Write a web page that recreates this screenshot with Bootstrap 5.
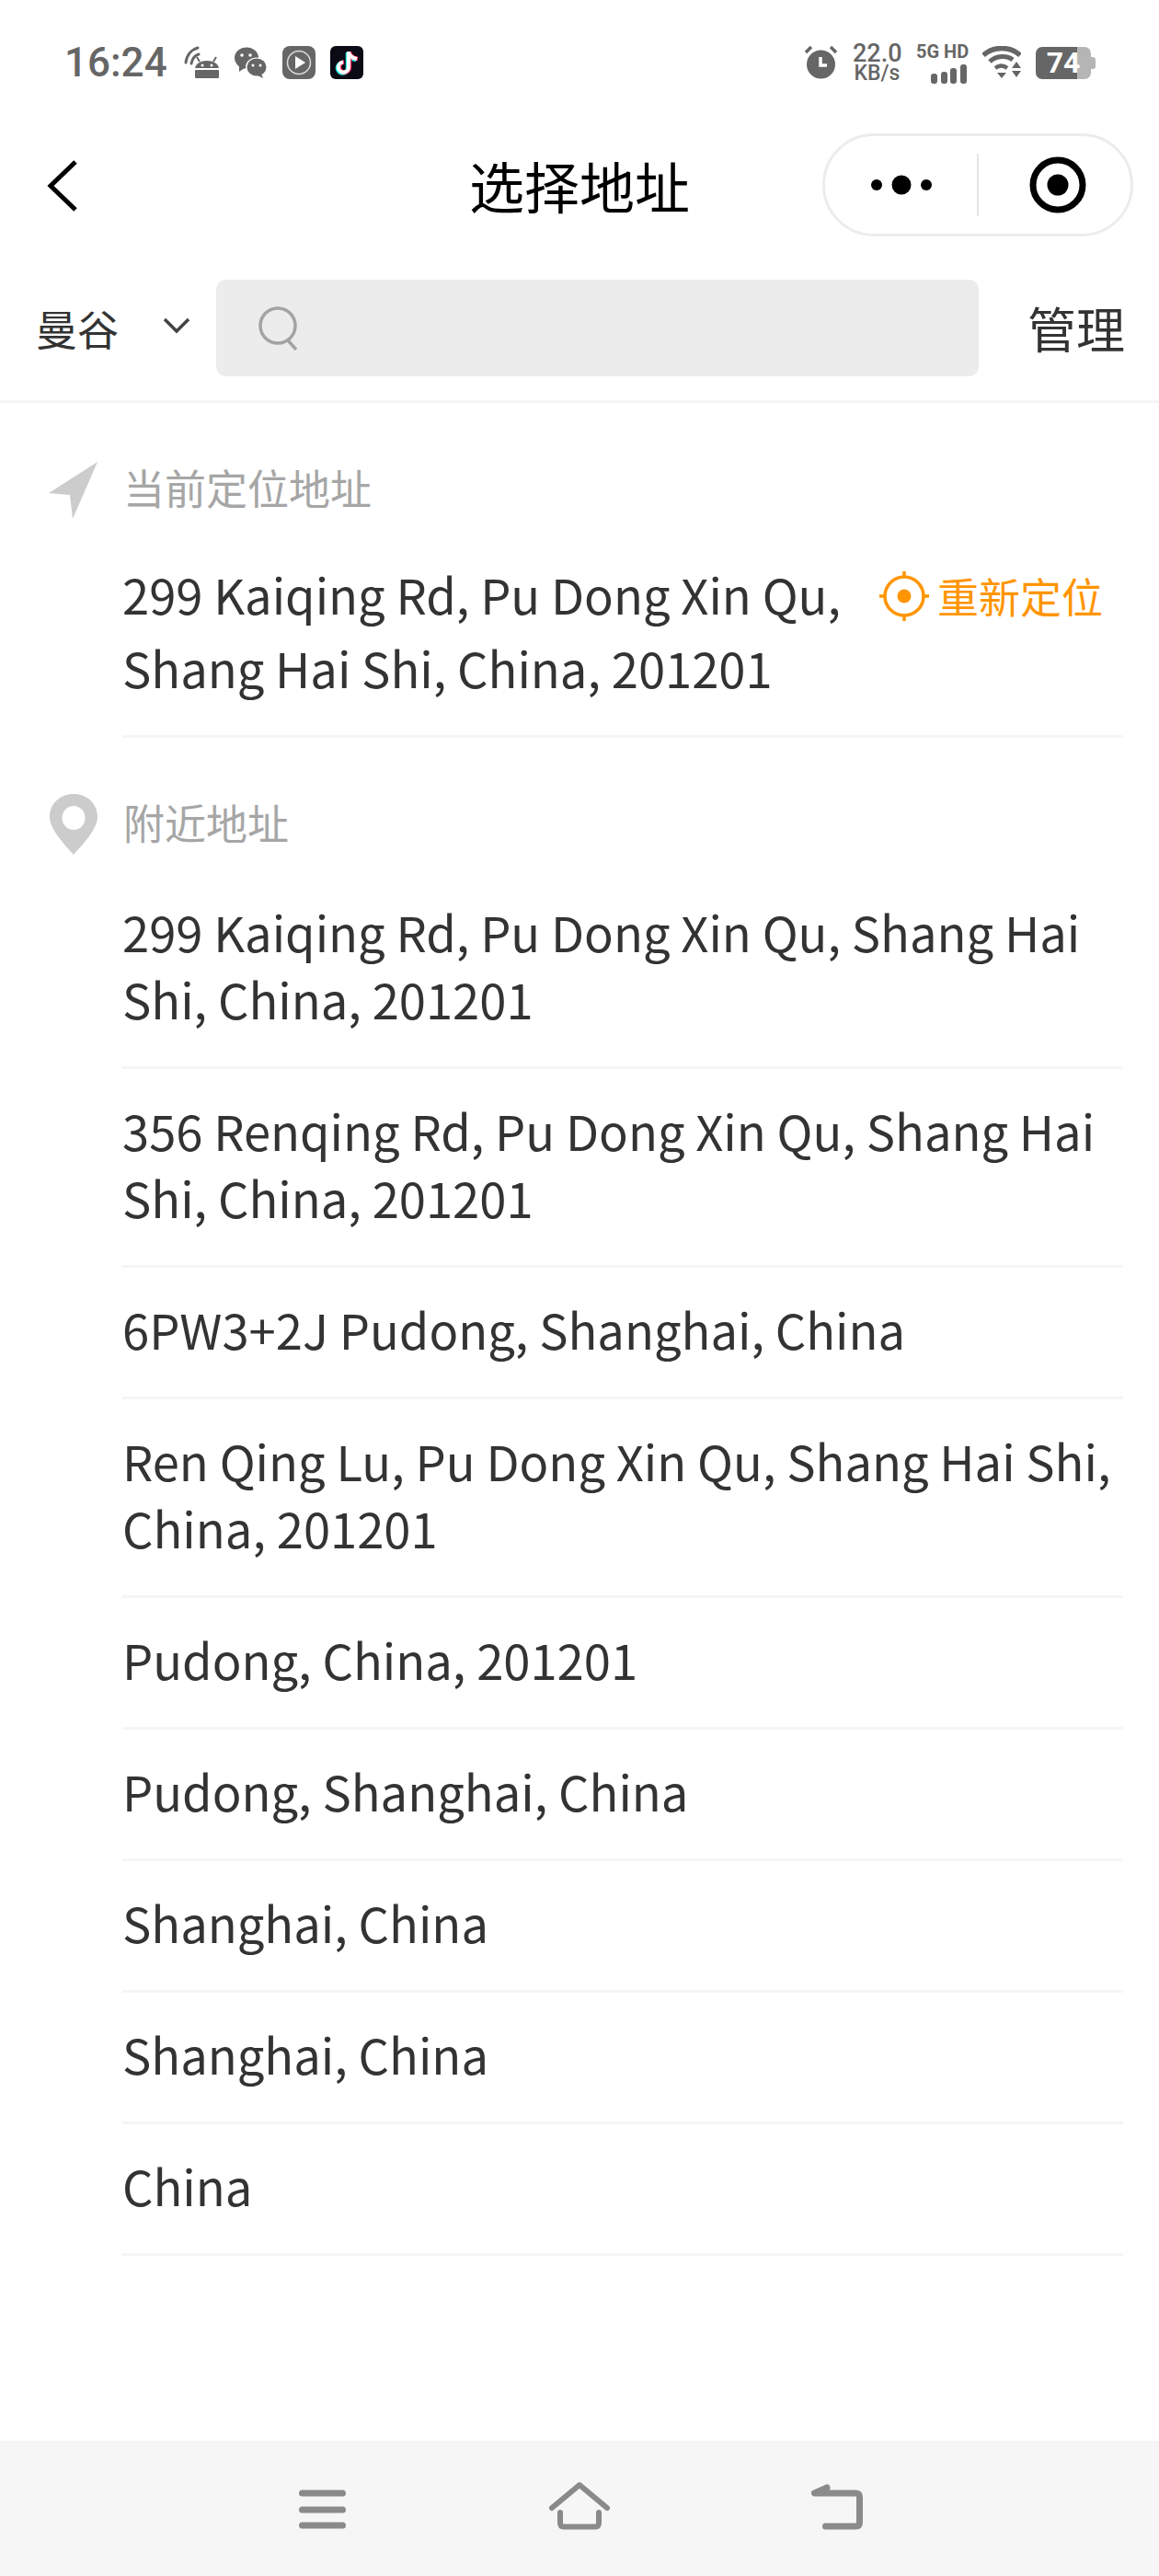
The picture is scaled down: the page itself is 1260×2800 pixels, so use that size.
<!DOCTYPE html>
<html lang="zh-CN">
<head>
    <meta charset="UTF-8">
    <meta name="viewport" content="width=device-width, initial-scale=1.0">
    <title>选择地址</title>
    <link href="https://cdn.jsdelivr.net/npm/bootstrap@5.3.0/dist/css/bootstrap.min.css" rel="stylesheet">
    <style>
        body {
            font-family: "Noto Sans CJK SC", "Noto Sans", sans-serif;
            min-height: 2800px;
            background: #fff;
            color: #333;
        }
        .status-bar { height: 136px; padding: 0 70px; color: #666; }
        .status-time { font-family: Roboto, sans-serif; font-size: 44px; font-weight: 500; line-height: 1; width: 130px; }
        .status-speed { font-family: Roboto, sans-serif; font-weight: 500; line-height: 1; text-align: center; width: 53px; }
        .status-speed b { display: block; font-size: 27px; font-weight: 500; height: 23px; line-height: 23px; }
        .status-speed span { display: block; font-size: 23px; height: 20px; line-height: 20px; }
        .status-net { font-family: Roboto, sans-serif; font-weight: 700; font-size: 20px; line-height: 1; width: 56px; white-space: nowrap; }
        .status-batt {
            width: 60px; height: 35px; border-radius: 7px; color: #fff; position: relative;
            background: linear-gradient(90deg, #666 75%, #b5b5b5 75%);
            font-family: Roboto, sans-serif; font-weight: 700; font-size: 32px; line-height: 35px; text-align: center;
        }
        .status-batt::after {
            content: ""; position: absolute; right: -5px; top: 11px; width: 5px; height: 13px;
            background: #b5b5b5; border-radius: 0 3px 3px 0;
        }
        .nav-head { height: 130px; }
        .nav-back { position: absolute; left: 50px; top: 36px; }
        .nav-title { font-size: 60px; line-height: 1; color: #000; }
        .capsule {
            position: absolute; left: 894px; top: 9px; width: 338px; height: 112px;
            border: 3px solid #ececec; border-radius: 56px; background: #fff;
        }
        .capsule-cell { flex: 1 1 0; }
        .capsule-target { margin-left: 6px; }
        .capsule-line { width: 2px; height: 68px; background: #e5e5e5; }
        .search-row { padding: 38px 37px 26px 39px; border-bottom: 3px solid #f5f5f5; }
        .city { width: 196px; font-size: 45px; line-height: 105px; height: 105px; }
        .city svg { margin: 0 0 20px 48px; }
        .search-box { width: 829px; height: 105px; background: #ececec; border-radius: 10px; padding-left: 45px; }
        .manage { font-size: 53px; line-height: 1; }
        .sec-head { height: 70px; padding-left: 53px; gap: 27px; font-size: 45px; color: #a6a6a6; line-height: 1; }
        .sec-head-cur { margin-top: 56px; }
        .sec-head-near { margin-top: 56px; }
        .sec-icon { width: 54px; }
        .sec-head-cur svg { margin-top: 8px; }
        .sec-head-near svg { margin-top: 6px; }
        .cur-row { margin: 41px 39px 0 133px; padding-bottom: 34px; border-bottom: 3px solid #f5f5f5; }
        .cur-addr { font-size: 52.5px; line-height: 80px; width: 800px; }
        .relocate { color: #ff9500; font-size: 45px; line-height: 80px; gap: 9px; padding-right: 22px; margin-top: 3px; }
        .addr-list { margin: 0 39px 0 133px; }
        .addr-item { font-size: 52.5px; line-height: 73px; padding: 30px 0 37px; border-bottom: 3px solid #f5f5f5; }
        .addr-item:first-child { padding-top: 48px; }
        .bottom-bar { height: 147px; background: #f6f6f6; gap: 210px; }
    </style>
</head>
<body class="d-flex flex-column">
    <!-- Status bar -->
    <div class="status-bar d-flex align-items-center justify-content-between">
        <div class="d-flex align-items-center">
            <div class="status-time">16:24</div>
            <div class="d-flex align-items-center gap-3">
                <svg width="38" height="36" viewBox="0 0 38 36" fill="none">
                    <path d="M2 18C3 10 8 4 15 2M8 19C9 14 12 10 16 9" stroke="#666" stroke-width="3" stroke-linecap="round"/>
                    <path d="M12 24C13 19 18 16 25 16C32 16 37 19 38 24Z" fill="#666"/>
                    <path d="M17 17L14 12M32 17L35 12" stroke="#666" stroke-width="2"/>
                    <rect x="12" y="26" width="26" height="9" rx="1" fill="#666"/>
                    <circle cx="20" cy="21" r="1.5" fill="#fff"/><circle cx="30" cy="21" r="1.5" fill="#fff"/>
                </svg>
                <svg width="37" height="36" viewBox="0 0 37 36">
                    <ellipse cx="14" cy="13" rx="13" ry="11.5" fill="#666"/>
                    <path d="M6 21L6 28L13 23Z" fill="#666"/>
                    <ellipse cx="25" cy="23" rx="12" ry="10.5" fill="#fff"/>
                    <ellipse cx="25" cy="23" rx="10.5" ry="9.5" fill="#666"/>
                    <path d="M30 30L32 35L26 32Z" fill="#666"/>
                    <circle cx="9" cy="10" r="1.8" fill="#fff"/><circle cx="18" cy="10" r="1.8" fill="#fff"/>
                    <circle cx="21" cy="21" r="1.5" fill="#fff"/><circle cx="29" cy="21" r="1.5" fill="#fff"/>
                </svg>
                <svg width="36" height="36" viewBox="0 0 36 36">
                    <rect width="36" height="36" rx="8" fill="#666"/>
                    <circle cx="18" cy="18" r="12.5" fill="none" stroke="#ddd" stroke-width="1.5"/>
                    <path d="M14 11L25 18L14 25Z" fill="#fff"/>
                </svg>
                <svg width="36" height="36" viewBox="0 0 36 36" fill="none">
                    <rect width="36" height="36" rx="6" fill="#0b0b16"/>
                    <path d="M20 6V23A5.5 5.5 0 1 1 14 17.500M20 7C21 11 24 13 29 14" stroke="#25f4ee" stroke-width="4.500" transform="translate(-1 1)"/>
                    <path d="M20 6V23A5.500 5.500 0 1 1 14 17.500M20 7C21 11 24 13 29 14" stroke="#fe2c55" stroke-width="4.500" transform="translate(1 0)"/>
                    <path d="M20 6V23A5.500 5.500 0 1 1 14 17.500M20 7C21 11 24 13 29 14" stroke="#fff" stroke-width="4"/>
                </svg>
            </div>
        </div>
        <div class="d-flex align-items-center">
            <svg width="37" height="38" viewBox="0 0 37 38" class="me-3">
                <circle cx="18.500" cy="21" r="15.500" fill="#666"/>
                <path d="M18 13V22H25" fill="none" stroke="#fff" stroke-width="3.500"/>
                <path d="M2 8L8 2M35 8L29 2" stroke="#666" stroke-width="3.500"/>
            </svg>
            <div class="status-speed"><b>22.0</b><span>KB/s</span></div>
            <div class="status-net ms-3">
                5G HD
                <svg width="40" height="21" viewBox="0 0 40 21" class="d-block ms-auto mt-1">
                    <rect x="0" y="10" width="7" height="11" rx="3" fill="#666"/>
                    <rect x="11" y="8" width="7" height="13" rx="3" fill="#666"/>
                    <rect x="21" y="4" width="7" height="17" rx="3" fill="#666"/>
                    <rect x="32" y="0" width="7" height="21" rx="3" fill="#666"/>
                </svg>
            </div>
            <svg width="42" height="36" viewBox="0 0 42 36" class="ms-3" fill="none">
                <path d="M1 10C12 0 30 0 41 10" stroke="#666" stroke-width="5.500"/>
                <path d="M8 17C15 10 27 10 33 15" stroke="#666" stroke-width="5"/>
                <path d="M14 24C18 21 23 21 27 24" stroke="#666" stroke-width="4.500"/>
                <path d="M16 29H26L21 35Z" fill="#666"/>
                <path d="M37 17L42 24H32ZM32 27H42L37 34Z" fill="#666"/>
            </svg>
            <div class="status-batt ms-3 me-1">74</div>
        </div>
    </div>

    <!-- Title bar -->
    <div class="nav-head position-relative d-flex align-items-center justify-content-center">
        <svg class="nav-back" width="36" height="60" viewBox="0 0 36 60" fill="none">
            <path d="M32 4L5 30L32 56" stroke="#000" stroke-width="5"/>
        </svg>
        <div class="nav-title">选择地址</div>
        <div class="capsule d-flex align-items-center">
            <div class="capsule-cell d-flex justify-content-center">
                <svg width="66" height="22" viewBox="0 0 66 22">
                    <circle cx="6" cy="11" r="6" fill="#000"/><circle cx="33" cy="11" r="10.500" fill="#000"/><circle cx="60" cy="11" r="6" fill="#000"/>
                </svg>
            </div>
            <div class="capsule-line"></div>
            <div class="capsule-cell d-flex justify-content-center">
                <svg class="capsule-target" width="62" height="62" viewBox="0 0 62 62">
                    <circle cx="31" cy="31" r="27" fill="none" stroke="#000" stroke-width="7"/>
                    <circle cx="31" cy="31" r="11.500" fill="#000"/>
                </svg>
            </div>
        </div>
    </div>

    <!-- City and search -->
    <div class="search-row d-flex align-items-center">
        <div class="city">曼谷<svg width="30" height="18" viewBox="0 0 30 18" fill="none"><path d="M2 2L15 15L28 2" stroke="#444" stroke-width="3.500"/></svg></div>
        <div class="search-box d-flex align-items-center">
            <svg width="44" height="48" viewBox="0 0 44 48" fill="none">
                <circle cx="22" cy="21" r="19" stroke="#a3a3a3" stroke-width="3.500"/>
                <path d="M33 37L42 47" stroke="#a3a3a3" stroke-width="3.500"/>
            </svg>
        </div>
        <div class="manage ms-auto">管理</div>
    </div>

    <!-- Current location -->
    <div class="sec-head sec-head-cur d-flex align-items-center">
        <div class="sec-icon d-flex justify-content-center">
            <svg width="54" height="62" viewBox="0 0 54 62"><path d="M53 0L26 62L23 36L0 34Z" fill="#ccc"/></svg>
        </div>
        <div>当前定位地址</div>
    </div>
    <div class="cur-row d-flex justify-content-between">
        <div class="cur-addr">299 Kaiqing Rd, Pu Dong Xin Qu, Shang Hai Shi, China, 201201</div>
        <div class="relocate d-flex align-items-center align-self-start">
            <svg width="54" height="54" viewBox="0 0 54 54" fill="none">
                <circle cx="27" cy="27" r="21" stroke="#ff9500" stroke-width="3.500"/>
                <circle cx="27" cy="27" r="7.500" fill="#ff9500"/>
                <path d="M27 0V7M27 47V54M0 27H7M47 27H54" stroke="#ff9500" stroke-width="3.500"/>
            </svg>
            <span>重新定位</span>
        </div>
    </div>

    <!-- Nearby -->
    <div class="sec-head sec-head-near d-flex align-items-center">
        <div class="sec-icon d-flex justify-content-center">
            <svg width="52" height="66" viewBox="0 0 52 66">
                <path fill-rule="evenodd" d="M26 0C40 0 52 10 52 25C52 38 36 55 26 66C16 55 0 38 0 25C0 10 12 0 26 0ZM26 13A12.500 13 0 1 0 26 39A12.500 13 0 1 0 26 13Z" fill="#ccc"/>
            </svg>
        </div>
        <div>附近地址</div>
    </div>
    <div class="addr-list">
        <div class="addr-item">299 Kaiqing Rd, Pu Dong Xin Qu, Shang Hai Shi, China, 201201</div>
        <div class="addr-item">356 Renqing Rd, Pu Dong Xin Qu, Shang Hai Shi, China, 201201</div>
        <div class="addr-item">6PW3+2J Pudong, Shanghai, China</div>
        <div class="addr-item">Ren Qing Lu, Pu Dong Xin Qu, Shang Hai Shi, China, 201201</div>
        <div class="addr-item">Pudong, China, 201201</div>
        <div class="addr-item">Pudong, Shanghai, China</div>
        <div class="addr-item">Shanghai, China</div>
        <div class="addr-item">Shanghai, China</div>
        <div class="addr-item">China</div>
    </div>

    <!-- Android nav bar -->
    <div class="bottom-bar mt-auto d-flex align-items-center justify-content-center">
        <svg width="70" height="60" viewBox="0 0 70 60" fill="none" stroke="#8a8a8a" stroke-width="7" stroke-linecap="round">
            <path d="M13.500 13H57.500M13.500 31H57.500M13.500 48H57.500"/>
        </svg>
        <svg width="70" height="60" viewBox="0 0 70 60" fill="none" stroke="#8a8a8a" stroke-linecap="round" stroke-linejoin="round">
            <path d="M5 29L35 4L65 29" stroke-width="6"/>
            <path d="M14 34V45Q14 49.500 18 49.500H52Q56 49.500 56 45V34" stroke-width="6"/>
        </svg>
        <svg width="70" height="60" viewBox="0 0 70 60" fill="none" stroke="#8a8a8a" stroke-width="7" stroke-linecap="round" stroke-linejoin="round">
            <path d="M24 7L10.500 13H55Q59.500 13 59.500 17.500V44.500Q59.500 49 55 49H22.500"/>
        </svg>
    </div>

    <script src="https://cdn.jsdelivr.net/npm/bootstrap@5.3.0/dist/js/bootstrap.bundle.min.js"></script>
</body>
</html>
